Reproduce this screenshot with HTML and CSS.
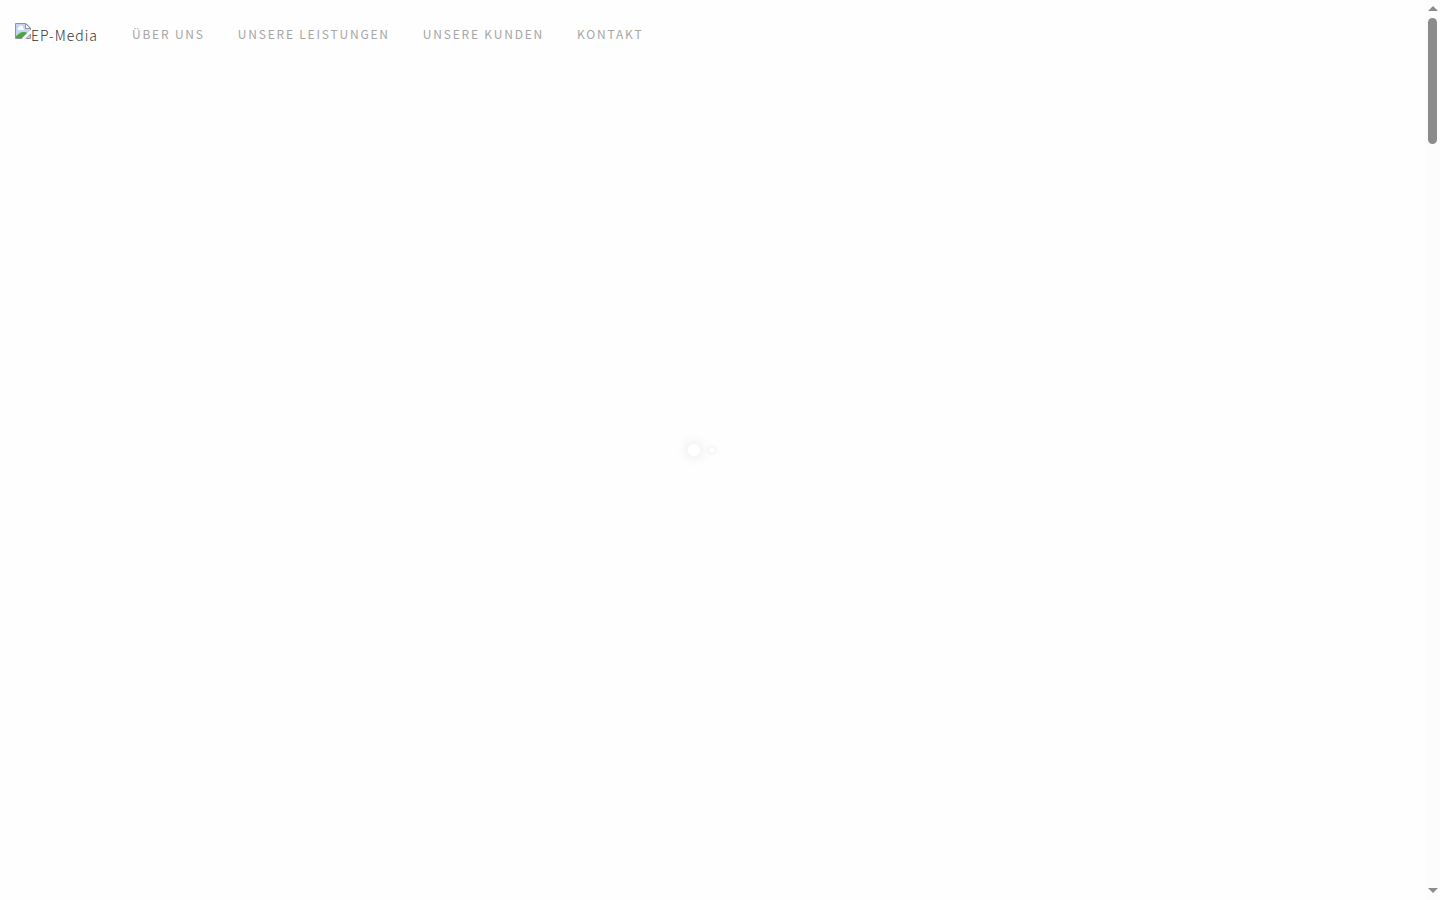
FILE: index.html
```html
<!DOCTYPE html>
<html lang="de">
<head>
    <meta charset="UTF-8">
    <meta name="viewport" content="width=device-width, initial-scale=1.0">
    <title>EP-Media</title>
    <link rel="stylesheet" href="styles.css">
</head>
<body>
    <div class="page">
        <header class="navbar">
            <a class="navbar-brand" href="#home">
                <svg class="brand-icon" width="16" height="16" viewBox="0 0 16 16" aria-hidden="true">
                    <path d="M0.5 0.5H11L15.5 5V7L7 15.5H0.5Z" fill="#c3d5f5"/>
                    <path d="M3 7a2 2 0 0 1 1-3 2 2 0 0 1 4 1 1 1 0 0 1 0 2Z" fill="#fff"/>
                    <path d="M1 15v-2c2-1 4-4 7-4 2 0 3 0 4 1L7 15Z" fill="#4ca63c"/>
                    <path d="M7 15.5H0.5V0.5H11L15.5 5V7" fill="none" stroke="#8f969e"/>
                    <path d="M10.5 0.5V5.500H15.500Z" fill="#f5f7fa" stroke="#8f969e"/>
                    <path d="M11 15.500L15.500 11V15.500Z" fill="#c3d5f5" stroke="#8f969e"/>
                </svg>
                <span>EP-Media</span>
            </a>
            <nav class="navbar-nav">
                <a class="nav-link" href="#about">Über uns</a>
                <a class="nav-link" href="#services">Unsere Leistungen</a>
                <a class="nav-link" href="#clients">Unsere Kunden</a>
                <a class="nav-link" href="#contact">Kontakt</a>
            </nav>
        </header>

        <main class="intro" id="home">
            <div class="loader">
                <span class="loader-dot"></span>
                <span class="loader-dot loader-dot-small"></span>
            </div>
        </main>
    </div>

    <div class="scrollbar" aria-hidden="true">
        <span class="scrollbar-arrow scrollbar-up"></span>
        <span class="scrollbar-track"><span class="scrollbar-thumb"></span></span>
        <span class="scrollbar-arrow scrollbar-down"></span>
    </div>
</body>
</html>
```
FILE: styles.css
```css
* {
    margin: 0;
    padding: 0;
    box-sizing: border-box;
}

body {
    display: flex;
    min-height: 100vh;
    background: #fefefe;
    font-family: "Noto Sans CJK SC", "Noto Sans", sans-serif;
    font-weight: 300;
}

.page {
    flex: 1;
    display: flex;
    flex-direction: column;
}

/* Navigation */
.navbar {
    display: flex;
    align-items: center;
    gap: 34px;
    height: 70px;
    padding: 0 15px;
}

.navbar-brand {
    display: flex;
    align-items: center;
    color: #333;
    font-size: 14px;
    line-height: 24px;
    letter-spacing: 1px;
    text-decoration: none;
}

.brand-icon {
    display: block;
    margin-bottom: 8px;
}

.navbar-nav {
    display: flex;
    gap: 33px;
    padding-bottom: 2px;
}

.nav-link {
    color: #a6a6a6;
    font-size: 12px;
    font-weight: 400;
    line-height: 20px;
    letter-spacing: 0.15em;
    text-decoration: none;
    text-transform: uppercase;
}

.nav-link:hover {
    color: #222;
}

/* Loader */
.intro {
    flex: 1;
    display: flex;
    align-items: center;
    justify-content: center;
    padding-bottom: 70px;
}

.loader {
    display: flex;
    align-items: center;
    gap: 9px;
    padding-right: 22px;
}

.loader-dot {
    width: 12px;
    height: 12px;
    border-radius: 50%;
    background: #fff;
    box-shadow: 0 0 12px 3px #eee;
}

.loader-dot-small {
    width: 6px;
    height: 6px;
    box-shadow: 0 0 3px 1px #eee;
}

/* Scrollbar */
.scrollbar {
    position: sticky;
    top: 0;
    display: flex;
    flex-direction: column;
    align-items: center;
    width: 15px;
    height: 100vh;
    padding: 6px 0 7px;
    background: #fcfcfc;
}

.scrollbar-arrow {
    border: 5px solid transparent;
}

.scrollbar-up {
    border-top: 0;
    border-bottom-color: #8b8b8b;
}

.scrollbar-down {
    border-bottom: 0;
    border-top-color: #8b8b8b;
}

.scrollbar-track {
    flex: 1;
    width: 9px;
    padding: 7px 0;
}

.scrollbar-thumb {
    display: block;
    height: 126px;
    border-radius: 5px;
    background: #8b8b8b;
}
```
